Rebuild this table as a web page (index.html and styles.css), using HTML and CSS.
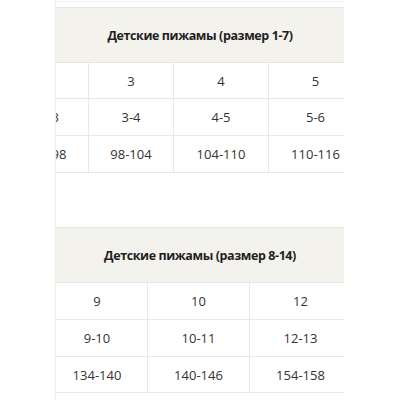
FILE: index.html
```html
<!DOCTYPE html>
<html lang="ru">
<head>
<meta charset="utf-8">
<title>Детские пижамы</title>
<link rel="stylesheet" href="styles.css">
</head>
<body>
<div class="page">
  <div class="cap"></div>

  <section class="size-table t1">
    <div class="head">Детские пижамы (размер 1-7)</div>
    <div class="row r-a">
      <div class="cell"></div><div class="cell">3</div><div class="cell">4</div><div class="cell">5</div>
    </div>
    <div class="row r-b">
      <div class="cell">2-3</div><div class="cell">3-4</div><div class="cell">4-5</div><div class="cell">5-6</div>
    </div>
    <div class="row r-b">
      <div class="cell">92-98</div><div class="cell">98-104</div><div class="cell">104-110</div><div class="cell">110-116</div>
    </div>
  </section>

  <section class="size-table t2">
    <div class="head">Детские пижамы (размер 8-14)</div>
    <div class="row r-b">
      <div class="cell">9</div><div class="cell">10</div><div class="cell">12</div>
    </div>
    <div class="row r-b">
      <div class="cell">9-10</div><div class="cell">10-11</div><div class="cell">12-13</div>
    </div>
    <div class="row r-a">
      <div class="cell">134-140</div><div class="cell">140-146</div><div class="cell">154-158</div>
    </div>
  </section>
</div>
</body>
</html>
```

FILE: styles.css
```css
* { box-sizing: border-box; }

html, body {
  margin: 0;
  padding: 0;
  background: #ffffff;
}

body {
  font-family: "Open Sans", "Noto Sans", sans-serif;
  color: #333333;
}

.page {
  margin-left: 55px;
  width: 289px;
  height: 400px;
  border-left: 1px solid #ededed;
  overflow: hidden;
}

.cap {
  margin-top: 1px;
  height: 6px;
  border-top: 1px solid #f1f1f1;
}

.size-table {
  display: flex;
  flex-direction: column;
}

.t2 { margin-top: 54px; }

.head {
  height: 56px;
  background: #f3f2ed;
  border-top: 1px solid #e6e6e4;
  border-bottom: 1px solid #e6e6e4;
  display: flex;
  align-items: center;
  justify-content: center;
  font-weight: 700;
  font-size: 12.5px;
  letter-spacing: -0.4px;
  color: #1f1f1f;
}

.row {
  display: grid;
  border-bottom: 1px solid #e8e8e8;
  font-size: 13px;
}

.r-a { height: 36px; }
.r-b { height: 37px; }

.t1 .row {
  grid-template-columns: 77px 85px 95px 94px;
  margin-left: -45px;
  width: 351px;
}

.t2 .row {
  grid-template-columns: 100px 102px 102px;
  margin-left: -9px;
  width: 304px;
}

.cell {
  display: flex;
  align-items: center;
  justify-content: center;
  white-space: nowrap;
}

.cell + .cell {
  border-left: 1px solid #e8e8e8;
}
```
